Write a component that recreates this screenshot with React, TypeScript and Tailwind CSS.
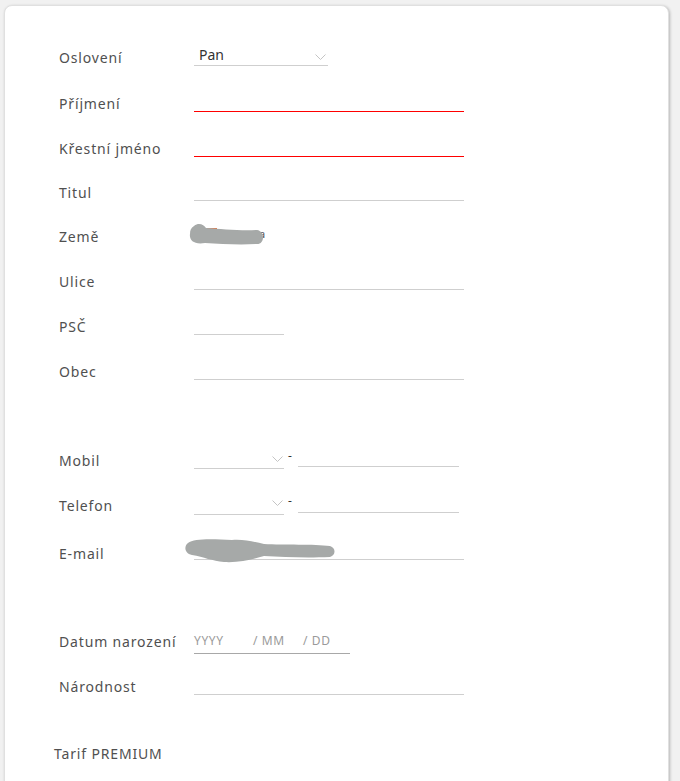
import { ReactNode } from 'react'

function Chevron({ className }: { className: string }) {
  return (
    <svg className={className} width="11" height="7" viewBox="0 0 11 7" fill="none">
      <path d="M0.5 0.5 L5.5 5.5 L10.5 0.5" stroke="#c4c4c4" strokeWidth="1" />
    </svg>
  )
}

function Row({ label, h = 'h-[45px]', children }: { label: string; h?: string; children?: ReactNode }) {
  return (
    <div className={`flex ${h} items-center`}>
      <div className="w-[135px] shrink-0 text-[14px] tracking-[0.06em] text-[#505050]">{label}</div>
      {children}
    </div>
  )
}

function Line({ w, red }: { w: string; red?: boolean }) {
  return <div className={`${w} h-[16px] border-b ${red ? 'border-[#ff0000]' : 'border-[#cfcfcf]'}`} />
}

export default function App() {
  return (
    <div className="min-h-screen bg-[#f1f1f1] px-[4px] pt-[5px] font-['Noto_Sans','Open_Sans',sans-serif]">
      <div className="h-[800px] w-[665px] rounded-[8px] border border-[#e0e0e0] bg-white pl-[54px] pt-[27px] shadow-[1px_1px_3px_rgba(0,0,0,0.25)]">
        <Row label="Oslovení" h="h-[48px]">
          <div className="relative mt-[-2px] flex h-[20px] w-[134px] items-start border-b border-[#cfcfcf] pl-[5px]">
            <span className="text-[14px] leading-[18px] text-[#333]">Pan</span>
            <Chevron className="absolute right-[2px] top-[8px]" />
          </div>
        </Row>
        <Row label="Příjmení">
          <Line w="w-[270px]" red />
        </Row>
        <Row label="Křestní jméno">
          <Line w="w-[270px]" red />
        </Row>
        <Row label="Titul" h="h-[43px]">
          <Line w="w-[270px]" />
        </Row>
        <Row label="Země">
          <svg width="82" height="26" viewBox="0 0 82 26" className="ml-[-5px] mt-[-2px]">
            <rect x="14" y="5" width="14" height="3" fill="#e07a4a" />
            <text x="70" y="15" fontSize="11" fill="#555">a</text>
            <path d="M5 3 C10 -1 15 2 17 5 C32 6 52 8 68 7 C76 8 76 21 68 21 C50 22 32 21 16 20 C5 22 0 17 1 11 C1 7 2 5 5 3 Z" fill="#a6a9a8" />
          </svg>
        </Row>
        <Row label="Ulice">
          <Line w="w-[270px]" />
        </Row>
        <Row label="PSČ">
          <Line w="w-[90px]" />
        </Row>
        <Row label="Obec">
          <Line w="w-[270px]" />
        </Row>
        <div className="h-[44px]" />
        <Row label="Mobil">
          <div className="relative mt-[16px] h-[1px] w-[90px] bg-[#cfcfcf]">
            <Chevron className="absolute right-[1px] top-[-12px]" />
          </div>
          <span className="mt-[-10px] ml-[4px] text-[12px] leading-none text-[#333]">-</span>
          <div className="ml-[6px] mt-[12px] h-[1px] w-[161px] bg-[#cfcfcf]" />
        </Row>
        <Row label="Telefon">
          <div className="relative mt-[18px] h-[1px] w-[90px] bg-[#cfcfcf]">
            <Chevron className="absolute right-[1px] top-[-14px]" />
          </div>
          <span className="mt-[-10px] ml-[4px] text-[12px] leading-none text-[#333]">-</span>
          <div className="ml-[6px] mt-[14px] h-[1px] w-[161px] bg-[#cfcfcf]" />
        </Row>
        <div className="flex h-[45px] items-center">
          <div className="mt-[5px] w-[135px] shrink-0 text-[14px] tracking-[0.06em] text-[#505050]">E-mail</div>
          <div className="relative mt-[17px] h-[1px] w-[270px] bg-[#cfcfcf]">
            <svg width="152" height="28" viewBox="0 0 152 28" className="absolute left-[-10px] top-[-22px]">
              <path d="M4 6 C10 1 30 2 48 3 C60 2 70 5 80 7 C100 8 130 7 146 9 C152 11 152 18 146 20 C120 21 100 20 80 19 C70 22 55 26 40 25 C28 24 20 20 8 18 C0 16 0 9 4 6 Z" fill="#a6a9a8" />
            </svg>
          </div>
        </div>
        <div className="h-[46px]" />
        <Row label="Datum narození">
          <div className="mt-[2px] flex h-[22px] w-[156px] items-start border-b border-[#a8a8a8] text-[12px] tracking-[0.05em] text-[#9a9a9a]">
            <span className="w-[59px]">YYYY</span>
            <span className="w-[50px]">/ MM</span>
            <span>/ DD</span>
          </div>
        </Row>
        <Row label="Národnost">
          <Line w="w-[270px]" />
        </Row>
        <div className="h-[34px]" />
        <div className="ml-[-5px] text-[14px] tracking-[0.06em] text-[#505050]">Tarif PREMIUM</div>
      </div>
    </div>
  )
}
